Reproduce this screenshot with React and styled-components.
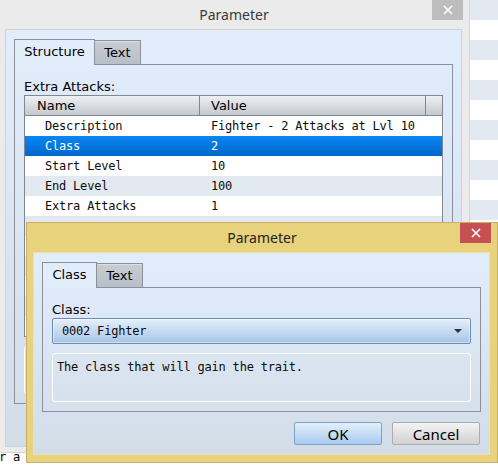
import React from "react";
import styled, { createGlobalStyle } from "styled-components";

const GlobalStyle = createGlobalStyle`
  html, body {
    margin: 0;
    padding: 0;
    background: #ffffff;
  }
  body {
    font-family: "DejaVu Sans", Verdana, sans-serif;
  }
  * {
    box-sizing: border-box;
  }
`;

// Desktop with the app that sits behind both dialogs
const Desktop = styled.div`
  position: relative;
  width: 498px;
  height: 465px;
  overflow: hidden;
  display: flex;
  background: #ffffff;
`;

const EditorArea = styled.div`
  flex: 1;
  display: flex;
  flex-direction: column;
  justify-content: flex-end;
  padding-bottom: 1px;
`;

const EditorLine = styled.div`
  margin-left: -1px;
  font-family: "DejaVu Sans Mono", monospace;
  font-size: 12px;
  letter-spacing: -0.2px;
  line-height: 14px;
  color: #000000;
  white-space: pre;
`;

const SideList = styled.div`
  width: 28px;
  display: flex;
  flex-direction: column;
`;

const SideRow = styled.div`
  flex: none;
  height: 20px;
  background: ${props => (props.$alt ? "#e3e9f1" : "#ffffff")};
`;

// Window chrome
const Window = styled.div`
  position: absolute;
  left: ${props => props.$x}px;
  top: ${props => props.$y}px;
  width: ${props => props.$w}px;
  height: ${props => props.$h}px;
  display: flex;
  flex-direction: column;
  background: ${props => (props.$active ? "#e9d27c" : "#ebebeb")};
  border: 1px solid ${props => (props.$active ? "#c8b068" : "#d4d4d4")};
`;

const TitleBar = styled.div`
  flex: none;
  height: 29px;
  display: grid;
  grid-template-columns: 1fr auto 1fr;
  align-items: center;
`;

const Title = styled.div`
  grid-column: 2;
  font-family: "Noto Sans", "Open Sans", sans-serif;
  font-size: 14px;
  color: ${props => (props.$active ? "#222222" : "#3a3a3a")};
`;

const CloseButton = styled.div`
  grid-column: 3;
  justify-self: end;
  align-self: start;
  width: 31px;
  height: 20px;
  margin-right: 6px;
  display: flex;
  align-items: center;
  justify-content: center;
  background: ${props => (props.$active ? "#c75050" : "#bdbdbd")};
`;

const Client = styled.div`
  flex: 1;
  margin: 0 7px 7px 6px;
  padding: 9px 8px 9px 8px;
  display: flex;
  flex-direction: column;
  border: 1px solid ${props => (props.$active ? "#efe2a8" : "#d2d2d2")};
  background: linear-gradient(#e2edfc, #d3dde8);
`;

// Tabs
const TabBar = styled.div`
  flex: none;
  display: flex;
  align-items: flex-end;
  height: 25px;
`;

const Tab = styled.div`
  position: relative;
  z-index: ${props => (props.$active ? 1 : 0)};
  width: ${props => props.$w}px;
  height: ${props => (props.$active ? 26 : 24)}px;
  margin-bottom: ${props => (props.$active ? -1 : 0)}px;
  margin-right: -1px;
  display: flex;
  align-items: center;
  justify-content: center;
  padding-bottom: ${props => (props.$active ? 2 : 0)}px;
  border: 1px solid #8a9199;
  border-bottom: none;
  font-size: 13px;
  color: #000000;
  background: ${props =>
    props.$active ? "#e2edfc" : "linear-gradient(#c8cdd3, #b8bfc6)"};
  box-shadow: ${props =>
    props.$active ? "none" : "inset 0 1px 0 rgba(255,255,255,0.35)"};
`;

const Pane = styled.div`
  flex: 1;
  display: flex;
  flex-direction: column;
  padding: 14px 9px 9px 9px;
  border: 1px solid #8a9199;
`;

const FieldLabel = styled.div`
  flex: none;
  height: 16px;
  line-height: 16px;
  font-size: 13px;
  color: #000000;
`;

// Property table
const Table = styled.div`
  flex: 1;
  display: flex;
  flex-direction: column;
  overflow: hidden;
  margin-bottom: 9px;
  border: 1px solid #7f8790;
  background: #ffffff;
`;

const HeaderRow = styled.div`
  flex: none;
  display: grid;
  grid-template-columns: 175px 226px 1fr;
  height: 20px;
  border-bottom: 1px solid #7f8790;
  background: linear-gradient(#eef0f2, #c4c9cf);
`;

const HeaderCell = styled.div`
  padding-left: ${props => props.$pad}px;
  line-height: 19px;
  font-size: 13px;
  color: #000000;
  border-right: ${props => (props.$last ? "none" : "1px solid #7f8790")};
`;

const Row = styled.div`
  flex: none;
  display: grid;
  grid-template-columns: 175px 1fr;
  height: 20px;
  line-height: 20px;
  font-family: "DejaVu Sans Mono", monospace;
  font-size: 12px;
  letter-spacing: -0.2px;
  color: ${props => (props.$selected ? "#ffffff" : "#0c0c0c")};
  background: ${props =>
    props.$selected
      ? "linear-gradient(#0b85f2, #0068cc)"
      : props.$alt
      ? "#e3e9f1"
      : "#ffffff"};
`;

const Cell = styled.div`
  padding-left: ${props => props.$pad}px;
  white-space: pre;
  overflow: hidden;
`;

// Combo box
const Combo = styled.div`
  flex: none;
  height: 26px;
  display: flex;
  align-items: center;
  justify-content: space-between;
  padding: 0 8px 0 9px;
  border: 1px solid #6b8db4;
  border-radius: 2px;
  background: linear-gradient(#e5effb, #a6c5e6);
  box-shadow: inset 0 0 0 1px rgba(255, 255, 255, 0.45);
  font-family: "DejaVu Sans Mono", monospace;
  font-size: 12px;
  letter-spacing: -0.2px;
  color: #0c0c0c;
`;

const ComboArrow = styled.span`
  width: 0;
  height: 0;
  border-left: 4px solid transparent;
  border-right: 4px solid transparent;
  border-top: 4px solid #333333;
`;

const DescBox = styled.div`
  flex: ${props => (props.$fixed ? "none" : 1)};
  height: ${props => (props.$fixed ? "48px" : "auto")};
  margin-top: ${props => (props.$fixed ? 0 : 9)}px;
  padding: 5px 4px;
  border: 1px solid #ffffff;
  border-radius: 3px;
  font-family: "DejaVu Sans Mono", monospace;
  font-size: 12px;
  letter-spacing: -0.2px;
  line-height: 16px;
  color: #0c0c0c;
`;

// Dialog buttons
const ButtonRow = styled.div`
  flex: none;
  display: flex;
  justify-content: flex-end;
  gap: 10px;
  height: 23px;
  margin-top: 10px;
  margin-right: 1px;
`;

const Button = styled.div`
  width: 88px;
  height: 23px;
  display: flex;
  align-items: center;
  justify-content: center;
  border: 1px solid ${props => (props.$default ? "#7ca2c9" : "#acacac")};
  border-radius: 2px;
  background: ${props =>
    props.$default
      ? "linear-gradient(#e4f0fc, #a8cbef)"
      : "linear-gradient(#f3f3f3, #d1d1d1)"};
  font-family: "Noto Sans", "Open Sans", sans-serif;
  font-size: 15px;
  color: #000000;
`;

const CloseIcon = () => (
  <svg width="10" height="10" viewBox="0 0 10 10">
    <path d="M1 1 L9 9 M9 1 L1 9" stroke="#ffffff" strokeWidth="1.6" />
  </svg>
);

const rows = [
  ["Description", "Fighter - 2 Attacks at Lvl 10"],
  ["Class", "2"],
  ["Start Level", "10"],
  ["End Level", "100"],
  ["Extra Attacks", "1"],
  ["", ""],
  ["", ""],
  ["", ""],
  ["", ""],
  ["", ""],
  ["", ""]
];

const sideRows = Array.from({ length: 24 }, (_, i) => i);

export default function App() {
  return (
    <>
      <GlobalStyle />
      <Desktop>
        <EditorArea>
          <EditorLine>r a</EditorLine>
        </EditorArea>
        <SideList>
          {sideRows.map(i => (
            <SideRow key={i} $alt={i % 2 === 0} />
          ))}
        </SideList>

        {/* Parent dialog, inactive; its buttons sit under the child dialog */}
        <Window $x={-2} $y={-1} $w={472} $h={454}>
          <TitleBar>
            <Title>Parameter</Title>
            <CloseButton>
              <CloseIcon />
            </CloseButton>
          </TitleBar>
          <Client>
            <TabBar>
              <Tab $active $w={81}>Structure</Tab>
              <Tab $w={47}>Text</Tab>
            </TabBar>
            <Pane>
              <FieldLabel>Extra Attacks:</FieldLabel>
              <Table>
                <HeaderRow>
                  <HeaderCell $pad={12}>Name</HeaderCell>
                  <HeaderCell $pad={11}>Value</HeaderCell>
                  <HeaderCell $last />
                </HeaderRow>
                {rows.map(([name, value], i) => (
                  <Row key={i} $alt={i % 2 === 1} $selected={i === 1}>
                    <Cell $pad={20}>{name}</Cell>
                    <Cell $pad={11}>{value}</Cell>
                  </Row>
                ))}
              </Table>
              <DescBox $fixed />
            </Pane>
            <ButtonRow />
          </Client>
        </Window>

        {/* Child dialog, active */}
        <Window $active $x={26} $y={222} $w={472} $h={241}>
          <TitleBar>
            <Title $active>Parameter</Title>
            <CloseButton $active>
              <CloseIcon />
            </CloseButton>
          </TitleBar>
          <Client $active>
            <TabBar>
              <Tab $active $w={55}>Class</Tab>
              <Tab $w={47}>Text</Tab>
            </TabBar>
            <Pane>
              <FieldLabel>Class:</FieldLabel>
              <Combo>
                <span>0002 Fighter</span>
                <ComboArrow />
              </Combo>
              <DescBox>The class that will gain the trait.</DescBox>
            </Pane>
            <ButtonRow>
              <Button $default>OK</Button>
              <Button>Cancel</Button>
            </ButtonRow>
          </Client>
        </Window>
      </Desktop>
    </>
  );
}
